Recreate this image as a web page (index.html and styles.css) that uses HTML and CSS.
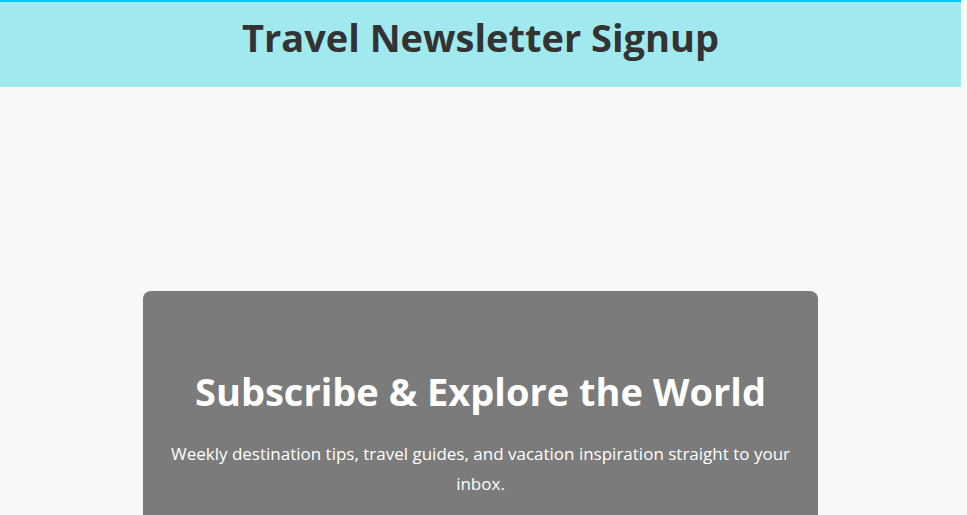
FILE: index.html
```html
<!DOCTYPE html>
<html lang="en">
<head>
<meta charset="utf-8">
<title>Travel Newsletter Signup</title>
<link rel="stylesheet" href="styles.css">
</head>
<body>
<div class="page">
  <header class="site-header">
    <h1 class="site-title">Travel Newsletter Signup</h1>
  </header>
  <main class="main">
    <section class="card">
      <h2 class="card-title">Subscribe &amp; Explore the World</h2>
      <p class="card-text">Weekly destination tips, travel guides, and vacation inspiration straight to your inbox.</p>
    </section>
  </main>
</div>
</body>
</html>
```

FILE: styles.css
```css
* { box-sizing: border-box; }
html, body { margin: 0; padding: 0; }
body {
  background: #f8f8f8;
  font-family: "Open Sans", "Noto Sans", sans-serif;
  color: #333;
}
.page { padding-right: 6px; }
.site-header {
  background: #a0e9ef;
  border-top: 2px solid #00c8ee;
  height: 87px;
  text-align: center;
}
.site-title {
  margin: 0;
  padding-top: 8px;
  font-size: 38px;
  font-weight: 700;
  line-height: 54px;
  color: #333;
}
.main {
  padding-top: 204px;
  display: flex;
  justify-content: center;
}
.card {
  width: 675px;
  background: #7b7b7b;
  border-radius: 8px;
  padding: 74px 26px 40px;
  text-align: center;
  color: #fff;
}
.card-title {
  margin: 0 0 22px;
  font-size: 38px;
  font-weight: 700;
  line-height: 52px;
}
.card-text {
  margin: 0;
  font-size: 17px;
  line-height: 30px;
}
```
